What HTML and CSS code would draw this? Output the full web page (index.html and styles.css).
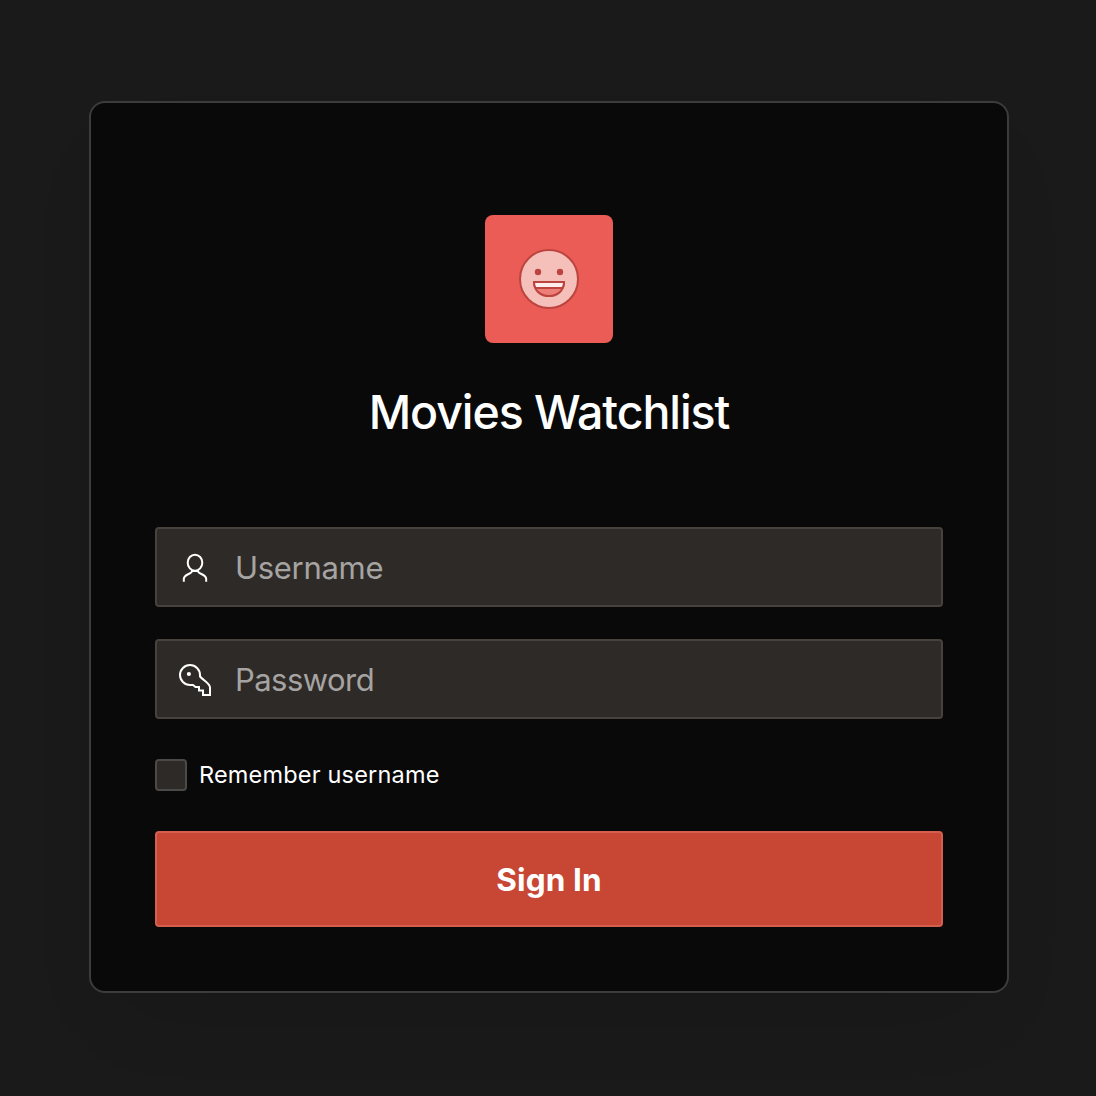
FILE: index.html
```html
<!DOCTYPE html>
<html lang="en">
<head>
<meta charset="utf-8">
<title>Movies Watchlist</title>
<link rel="stylesheet" href="styles.css">
</head>
<body>
<main class="card">
  <div class="logo">
    <svg width="64" height="64" viewBox="0 0 64 64" fill="none" stroke="#bc443f" stroke-width="2">
      <circle cx="32" cy="32" r="29" fill="#f5bfba"/>
      <circle cx="21" cy="25" r="3.200" fill="#bc443f" stroke="none"/>
      <circle cx="43" cy="25" r="3.200" fill="#bc443f" stroke="none"/>
      <path d="M17 35H47C47 44 40 49 32 49S17 44 17 35Z" fill="#ee7f78"/>
      <path d="M17 35H47Q47 38.500 45.500 41H18.500Q17 38.500 17 35Z" fill="#fdeeed"/>
    </svg>
  </div>
  <h1 class="title">Movies Watchlist</h1>
  <form class="form">
    <label class="field">
      <svg class="icon" width="40" height="40" viewBox="0 0 40 40">
        <ellipse cx="20" cy="14.700" rx="7.300" ry="8"/>
        <path d="M17 22V23C17 26 8.800 26.300 8.800 31V33.800M17 23H23M23 22V23C23 26 31.200 26.300 31.200 31V33.800"/>
      </svg>
      <input class="input username" type="text" placeholder="Username">
    </label>
    <label class="field">
      <svg class="icon" width="40" height="40" viewBox="0 0 40 40">
        <path d="M25 17V15A10 10 0 1 0 15 25H18L20.500 27H24V30.500H28V35H35V27.500C35 23.500 29 21 25 16.500"/>
        <circle class="dot" cx="13.900" cy="14" r="2.100"/>
      </svg>
      <input class="input password" type="password" placeholder="Password">
    </label>
    <label class="remember"><input class="check" type="checkbox"><span>Remember username</span></label>
    <button class="submit" type="button"><span>Sign In</span></button>
  </form>
</main>
</body>
</html>
```
FILE: styles.css
```css
* { box-sizing: border-box; }
body {
  margin: 0;
  height: 1096px;
  padding: 101px 87px 0 89px;
  background: #1a1a1a;
  color: #fff;
  font-family: Inter, "Liberation Sans", sans-serif;
  overflow: hidden;
}
.card {
  height: 892px;
  padding: 112px 64px 0;
  display: flex;
  flex-direction: column;
  align-items: center;
  background: #090909;
  border: 2px solid #3c3c3c;
  border-radius: 16px;
  box-shadow: 0 40px 80px -32px rgba(0, 0, 0, .14);
}
.logo {
  width: 128px;
  height: 128px;
  display: grid;
  place-items: center;
  background: #eb5c56;
  border-radius: 8px;
}
.title {
  margin: 39px 0 0;
  font-size: 46.500px;
  line-height: 60px;
  font-weight: 500;
  letter-spacing: -1.080px;
  white-space: nowrap;
}
.form {
  width: 100%;
  margin-top: 85px;
  display: flex;
  flex-direction: column;
}
.field {
  height: 80px;
  margin-bottom: 32px;
  padding: 2px 18px 0;
  display: flex;
  align-items: center;
  background: #2e2a27;
  border: 2px solid #47423c;
  border-radius: 4px;
}
.icon {
  flex: none;
  fill: none;
  stroke: #fff;
  stroke-width: 2;
}
.icon .dot { fill: #fff; stroke: none; }
.input {
  min-width: 0;
  flex: 1;
  margin-left: 20px;
  padding: 0;
  background: none;
  border: 0;
  color: #fff;
  font: 400 31px/40px Inter, "Liberation Sans", sans-serif;
}
.input::placeholder { color: #a6a4a2; opacity: 1; }
.username { letter-spacing: -.3px; }
.password { letter-spacing: -.55px; }
.remember {
  height: 32px;
  margin-top: 8px;
  display: flex;
  align-items: center;
  gap: 12px;
  font-size: 23.500px;
  line-height: 30px;
  letter-spacing: .18px;
}
.check {
  appearance: none;
  width: 32px;
  height: 32px;
  margin: 0;
  background: #2e2a27;
  border: 2px solid #4b4a48;
  border-radius: 4px;
}
.submit {
  height: 96px;
  margin-top: 40px;
  padding: 2px 0 0;
  background: #c74634;
  border: 2px solid #d55f4e;
  border-radius: 4px;
  color: #fff;
  font: 700 31.500px/40px Inter, "Liberation Sans", sans-serif;
  letter-spacing: .1px;
}
```
